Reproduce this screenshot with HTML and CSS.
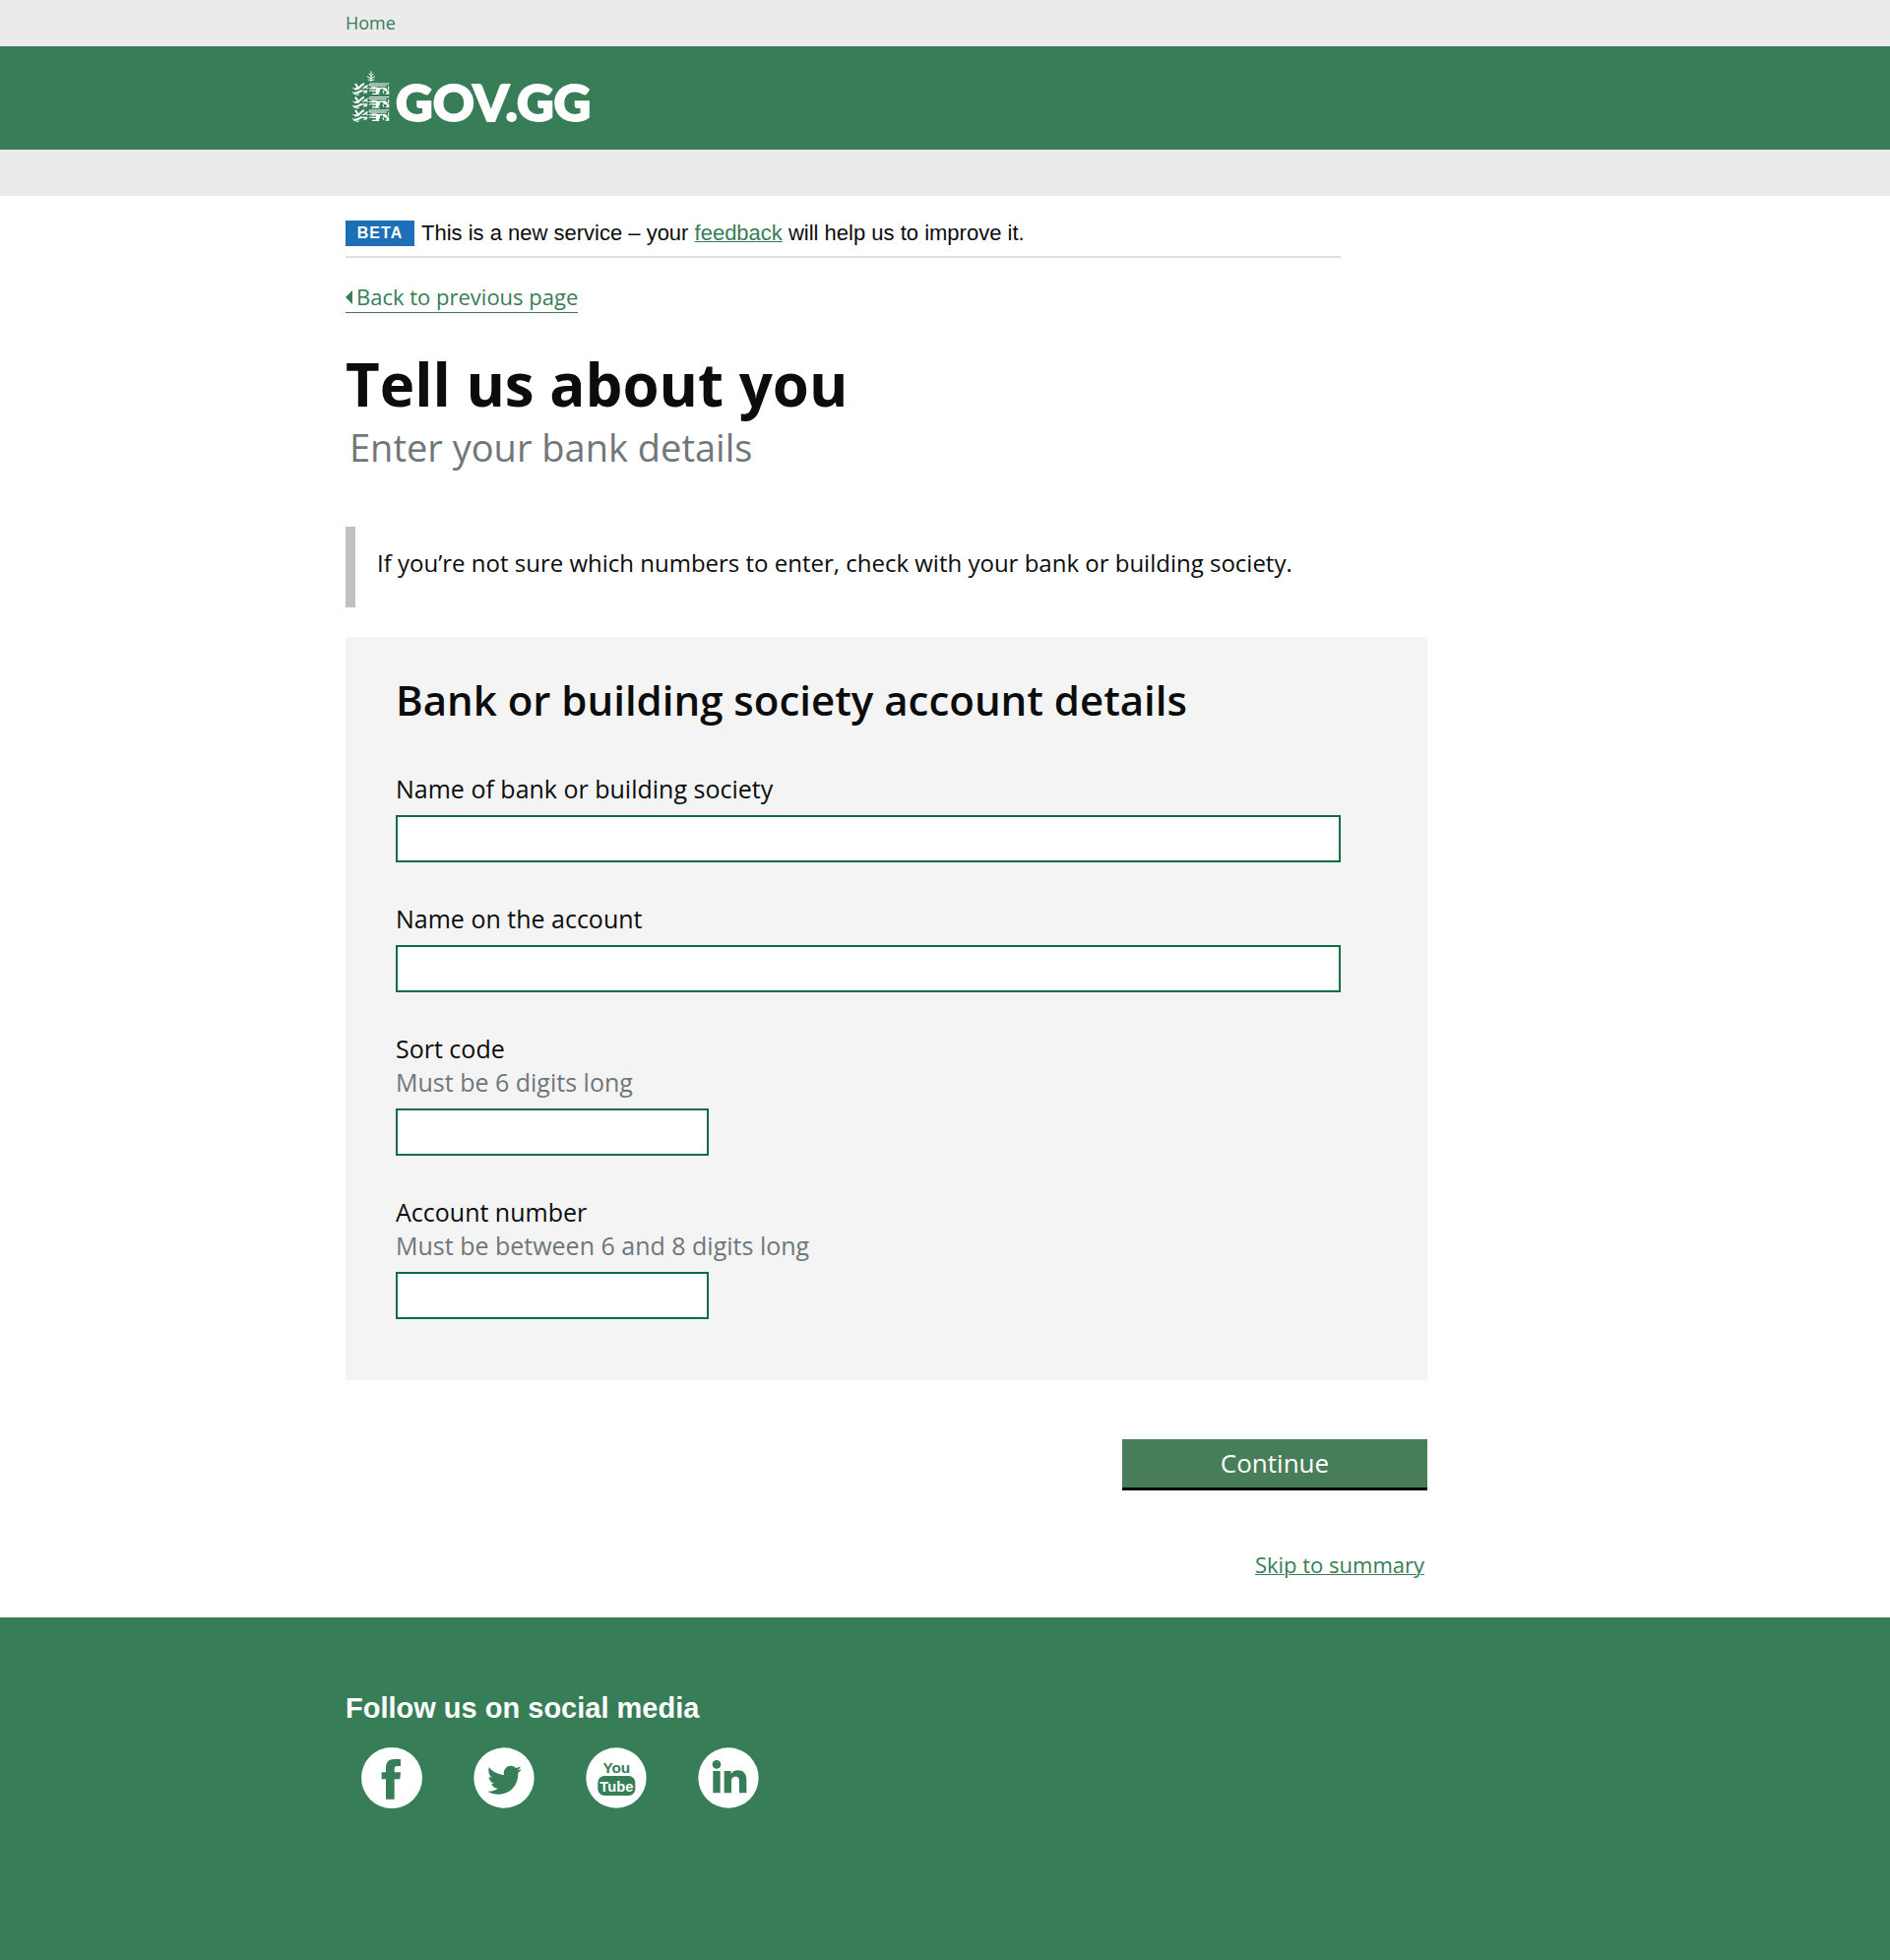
FILE: index.html
```html
<!DOCTYPE html>
<html lang="en">
<head>
<meta charset="utf-8">
<meta name="viewport" content="width=device-width, initial-scale=1">
<title>Tell us about you - GOV.GG</title>
<link rel="stylesheet" href="styles.css">
</head>
<body>
<nav class="topbar"><div class="wrap"><a class="topbar-link" href="#">Home</a></div></nav>
<header class="masthead">
  <div class="wrap">
    <a class="logo" href="#">
      <svg class="crest" viewBox="50 38 123 162" aria-hidden="true">
        <defs>
          <g id="lion" fill="none" stroke="#fff">
            <path stroke-width="6" d="M62 77l8 12M89 77c-8 2-12 8-16 13-3 3-8 4-14 2M83 99c-7-1-10 5-16 6l-10 2"/>
            <path stroke-width="3" d="M54 89l4 4M54 102l4 6M63 111l11-1"/>
            <path stroke-width="4" d="M84 92c7-3 10-8 16-10M84 99h15M87 105l11-2M89 86l11 5"/>
            <path stroke-width="3" d="M165 77h-58c-4 0-4 6 0 6h50M103 91l9 1M104 100l8-3"/>
            <path fill="#fff" stroke="none" d="M110 88c8-3 16-1 22 1l18-1c5 0 9 4 10 9l5 3v9h-11v-4h5l-3-5c-6-1-9-4-11-8l-8 2c0 6-1 10-5 13l5 3h-24v-4h10l3-5h-14v-4h12l2-4c-6 2-12 1-16-1z"/>
            <path stroke-width="3" d="M146 98l2 9M163 84v12"/>
          </g>
        </defs>
        <path fill="none" stroke="#fff" stroke-width="3" d="M110 39v32M110 54l-7-8M110 54l7-8M110 61l-12-6M110 61l12-6M110 66l-10-1M110 66l10-1"/>
        <use href="#lion"/><use href="#lion" y="41"/><use href="#lion" y="81"/>
      </svg>
      <span class="logo-text">GOV.GG</span>
    </a>
  </div>
</header>
<div class="subbar"></div>
<main class="wrap">
  <div class="phase">
    <strong class="tag">BETA</strong>
    <span>This is a new service – your <a href="#">feedback</a> will help us to improve it.</span>
  </div>
  <a class="back" href="#"><svg class="arrow" viewBox="0 0 7 14" aria-hidden="true"><path fill="currentColor" d="M0 7l7-7v14z"/></svg>Back to previous page</a>
  <h1 class="title">Tell us about you</h1>
  <p class="subtitle">Enter your bank details</p>
  <p class="inset">If you’re not sure which numbers to enter, check with your bank or building society.</p>
  <form>
    <section class="panel">
      <h2 class="panel-title">Bank or building society account details</h2>
      <div class="field">
        <label for="bank">Name of bank or building society</label>
        <input id="bank" type="text">
      </div>
      <div class="field">
        <label for="holder">Name on the account</label>
        <input id="holder" type="text">
      </div>
      <div class="field">
        <label for="sort">Sort code</label>
        <span class="hint" id="sort-hint">Must be 6 digits long</span>
        <input class="short" id="sort" type="text" aria-describedby="sort-hint">
      </div>
      <div class="field">
        <label for="number">Account number</label>
        <span class="hint" id="number-hint">Must be between 6 and 8 digits long</span>
        <input class="short" id="number" type="text" aria-describedby="number-hint">
      </div>
    </section>
    <div class="actions">
      <button class="button" type="submit">Continue</button>
      <a class="skip" href="#">Skip to summary</a>
    </div>
  </form>
</main>
<footer class="footer">
  <div class="wrap">
    <h2 class="footer-title">Follow us on social media</h2>
    <div class="social">
      <a href="#" aria-label="Facebook"><svg viewBox="0 0 186 186"><circle class="disc" cx="93" cy="93" r="93"/><path class="glyph" d="M120 36v21h-10c-7 0-9 3-9 9v10h19l-2 21h-17v61H75V97H62V76h13V63c0-17 8-27 26-27z"/></svg></a>
      <a href="#" aria-label="Twitter"><svg viewBox="0 0 186 186"><circle class="disc" cx="93" cy="93" r="92"/><path class="glyph" d="M47 61c12 14 27 21 46 23-3-15 7-28 21-28 7 0 12 3 16 7 5-1 9-3 13-5-1 5-4 9-9 12 4 0 8-2 12-3-2 4-6 8-10 11 1 39-26 65-59 65-13 0-24-3-34-9 12 1 22-2 31-9-10-1-17-6-19-15h9c-10-3-17-11-17-21 3 2 6 3 9 3-9-7-12-19-9-31z"/></svg></a>
      <a href="#" aria-label="YouTube"><svg viewBox="0 0 186 186"><circle class="disc" cx="93" cy="93" r="92"/><text class="word you" x="94" y="78">You</text><rect class="glyph" x="37" y="87" width="114" height="60" rx="20"/><text class="word tube" x="94" y="134">Tube</text></svg></a>
      <a href="#" aria-label="LinkedIn"><svg viewBox="0 0 186 186"><circle class="disc" cx="93" cy="93" r="92"/><g class="glyph"><circle cx="57" cy="52" r="13"/><path d="M46 72h22v67H46zM80 72h21v9c5-8 12-11 21-11 20 0 26 13 26 31v38h-22v-34c0-10-2-16-11-16-10 0-13 7-13 16v34H80z"/></g></svg></a>
    </div>
  </div>
</footer>
</body>
</html>
```
FILE: styles.css
```css
:root {
  --green: #377d57;
  --ink: #0b0c0c;
  --grey: #6f777b;
}
* { box-sizing: border-box; }
body {
  margin: 0;
  min-height: 100vh;
  display: flex;
  flex-direction: column;
  background: #fff;
  color: var(--ink);
  font-family: "Open Sans", "Noto Sans", sans-serif;
}
h1, h2, p { margin: 0; }
a { color: var(--green); }
.wrap {
  width: 100%;
  max-width: 1450px;
  padding-left: min(351px, 19%);
}
.topbar { background: #ebebeb; }
.topbar-link {
  display: inline-block;
  font-size: 18px;
  line-height: 47px;
  vertical-align: top;
  text-decoration: none;
}
.masthead {
  height: 105px;
  padding-top: 25px;
  background: var(--green);
}
.logo {
  display: flex;
  gap: 4px;
  padding-left: 6px;
  color: #fff;
  text-decoration: none;
}
.crest { width: 41px; height: 54px; }
.logo-text {
  font-family: Lato, sans-serif;
  font-size: 52px;
  font-weight: 900;
  line-height: 62px;
  -webkit-text-stroke: 2px #fff;
}
.subbar { height: 47px; background: #ebebeb; }
.phase {
  display: flex;
  gap: 7px;
  margin: 25px 88px 24px 0;
  padding-bottom: 10px;
  border-bottom: 2px solid #dedede;
  font-family: "Liberation Sans", Arial, sans-serif;
  font-size: 22px;
  line-height: 26px;
}
.phase a { text-decoration-thickness: 1px; }
.tag {
  width: 70px;
  background: #1d70b8;
  color: #fff;
  font-size: 16px;
  letter-spacing: 1px;
  text-align: center;
}
.back {
  display: inline-flex;
  align-items: center;
  gap: 4px;
  border-bottom: 1px solid var(--green);
  font-size: 22px;
  line-height: 31px;
  text-decoration: none;
}
.arrow { width: 7px; height: 14px; }
.title {
  margin-top: 36px;
  font-size: 60px;
  line-height: 72px;
}
.subtitle {
  margin-top: 2px;
  padding-left: 4px;
  color: var(--grey);
  font-size: 38px;
  line-height: 52px;
}
.inset {
  margin: 55px 0 30px;
  padding: 21px 0 29px 22px;
  border-left: 10px solid #bfc1c3;
  font-size: 24px;
  line-height: 32px;
}
.panel {
  padding: 36px 88px 62px 51px;
  background: #f4f4f4;
}
.panel-title {
  margin-bottom: 45px;
  font-size: 42px;
  font-weight: 600;
  line-height: 56px;
}
.field {
  display: flex;
  flex-direction: column;
  font-size: 25px;
  line-height: 34px;
}
.field + .field { margin-top: 40px; }
.hint { color: var(--grey); }
.field input {
  width: 100%;
  height: 48px;
  margin: 10px 0 0;
  padding: 0 10px;
  border: 2px solid #0a6e40;
  border-radius: 0;
  background: #fff;
  font: inherit;
}
.field .short { max-width: 318px; }
.actions {
  display: flex;
  flex-direction: column;
  align-items: flex-end;
  gap: 60px;
  padding: 60px 0 39px;
}
.button {
  width: 310px;
  height: 52px;
  padding: 0 0 2px;
  border: 0;
  border-bottom: 3px solid #000;
  background: #477d59;
  color: #fff;
  font: 26px/36px "Open Sans", "Noto Sans", sans-serif;
}
.skip {
  margin-right: 3px;
  font-size: 22px;
  line-height: 30px;
  text-decoration-thickness: 1px;
}
.footer {
  flex: 1;
  padding: 74px 0 60px;
  background: var(--green);
  color: #fff;
}
.footer-title {
  font-family: "Liberation Sans", Arial, sans-serif;
  font-size: 29px;
  line-height: 36px;
}
.social {
  display: flex;
  gap: 52px;
  padding: 22px 0 0 16px;
}
.social svg { display: block; width: 62px; height: 62px; }
.disc { fill: #fff; }
.glyph { fill: var(--green); }
.word {
  font-family: "Liberation Sans Narrow", "Liberation Sans", sans-serif;
  font-weight: 700;
  text-anchor: middle;
}
.you { fill: var(--green); font-size: 46px; }
.tube { fill: #fff; font-size: 44px; }
```
